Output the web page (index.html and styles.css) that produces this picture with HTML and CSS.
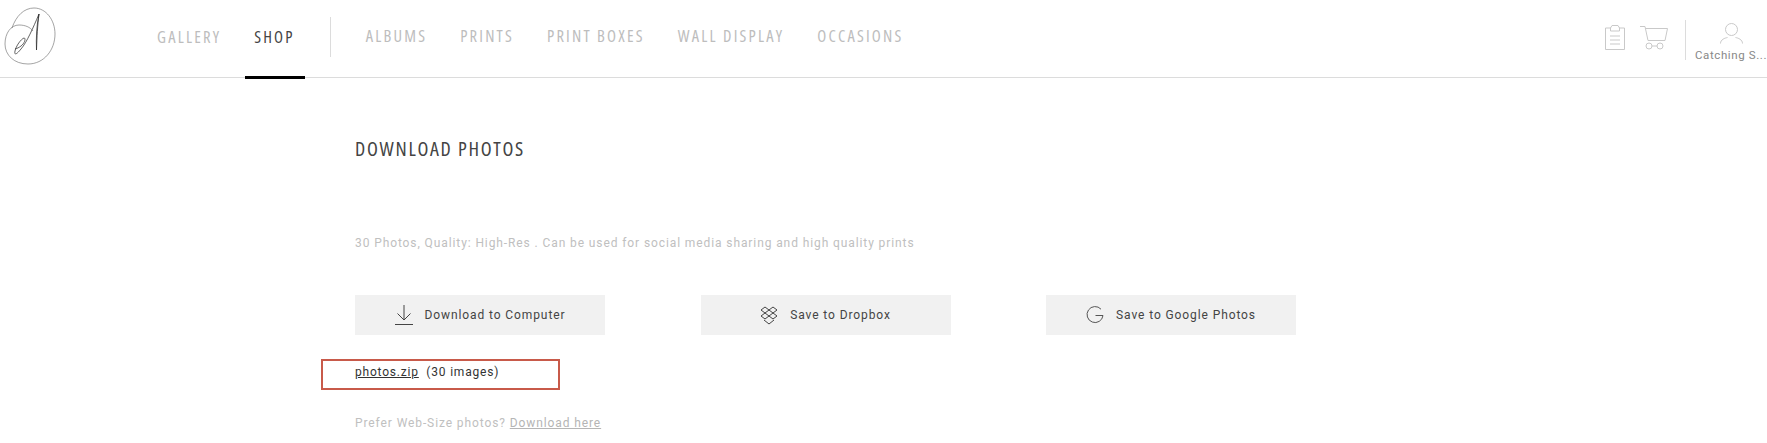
FILE: index.html
```html
<!DOCTYPE html>
<html lang="en">
<head>
<meta charset="utf-8">
<title>Download Photos</title>
<link rel="stylesheet" href="styles.css">
</head>
<body>
<header class="topbar">
  <a class="logo" href="#" aria-label="Logo">
    <svg width="60" height="70" viewBox="0 0 60 70" fill="none">
      <path d="M12 28C16 16 24 8 34 8C46 8 55 20 55 34C55 50 44 64 28 64C14 64 5 55 5 44C5 33 11 25 19 25C25 25 30 27 33 31" stroke="#666" stroke-width=".6"/>
      <path d="M39 14C37.500 26 37 36 36.500 50C36 38 36.500 26 39 14ZM39 14C33 28 27 42 21 49C17 54 14 56 15 51C16 46 21 39 24 38C26 38 25 43 21 46C19 47.500 17 48.500 15 49" stroke="#222" stroke-width=".7"/>
    </svg>
  </a>
  <nav class="nav">
    <a class="nav-link low" href="#">GALLERY</a>
    <a class="nav-link low active" href="#">SHOP</a>
    <span class="nav-sep"></span>
    <a class="nav-link" href="#">ALBUMS</a>
    <a class="nav-link" href="#">PRINTS</a>
    <a class="nav-link" href="#">PRINT BOXES</a>
    <a class="nav-link" href="#">WALL DISPLAY</a>
    <a class="nav-link" href="#">OCCASIONS</a>
  </nav>
  <div class="tools">
    <svg class="tool-clip" width="20" height="25" viewBox="0 0 20 25" fill="none" stroke="#c9c9c9" stroke-width="1">
      <path d="M6 3H.5V24.500H19.500V3H14"/>
      <path d="M5.500 6V3L7 .5H13L14.500 3V6Z"/>
      <path d="M5 11H15M5 15H15M5 19H15"/>
    </svg>
    <svg class="tool-cart" width="28" height="24" viewBox="0 0 28 24" fill="none" stroke="#c9c9c9" stroke-width="1">
      <path d="M0 .5H5L8 14.500H25L27.500 2.500H5.500"/>
      <circle cx="9" cy="20" r="3"/>
      <circle cx="20" cy="20" r="3"/>
      <path d="M12 20H17"/>
    </svg>
    <span class="tool-sep"></span>
    <div class="user">
      <svg width="23" height="21" viewBox="0 0 23 21" fill="none" stroke="#c9c9c9" stroke-width="1">
        <circle cx="11.500" cy="6.500" r="6"/>
        <path d="M.5 20.500C.5 16.500 5 15 7.500 14.500M22.500 20.500C22.500 16.500 18 15 15.500 14.500"/>
      </svg>
      <span class="user-name">Catching S...</span>
    </div>
  </div>
</header>
<main class="content">
  <h1 class="title">DOWNLOAD PHOTOS</h1>
  <p class="desc">30 Photos, Quality: High-Res . Can be used for social media sharing and high quality prints</p>
  <div class="actions">
    <a class="btn" href="#">
      <svg width="18" height="20" viewBox="0 0 18 20" fill="none" stroke="#444" stroke-width="1">
        <path d="M9 0V15M2.500 8.500L9 15L15.500 8.500M0 19.500H18"/>
      </svg>
      <span>Download to Computer</span>
    </a>
    <a class="btn" href="#">
      <svg width="18" height="19" viewBox="0 0 18 19" fill="none" stroke="#444" stroke-width="1">
        <path d="M5 1L9 4L5 7L1 4ZM13 1L17 4L13 7L9 4ZM5 7L9 10L5 13L1 10ZM13 7L17 10L13 13L9 10ZM4 14L9 18L14 14"/>
      </svg>
      <span>Save to Dropbox</span>
    </a>
    <a class="btn" href="#">
      <svg width="18" height="18" viewBox="0 0 18 18" fill="none" stroke="#555" stroke-width="1">
        <path d="M15 3.200A8 8 0 1 0 17 9.500H9.500"/>
      </svg>
      <span>Save to Google Photos</span>
    </a>
  </div>
  <div class="file-box"><a class="file-link" href="#">photos.zip</a>&nbsp; (30 images)</div>
  <p class="prefer">Prefer Web-Size photos? <a class="prefer-link" href="#">Download here</a></p>
</main>
</body>
</html>
```
FILE: styles.css
```css
* { box-sizing: border-box; }
html, body { margin: 0; padding: 0; }
body {
  background: #fff;
  font-family: "Roboto", "Liberation Sans", sans-serif;
  color: #333;
  height: 443px;
  overflow: hidden;
}
a { color: inherit; text-decoration: none; }

.topbar {
  height: 78px;
  border-bottom: 1px solid #dcdcdc;
  display: flex;
  align-items: flex-start;
}
.logo { display: block; width: 157px; flex: none; }
.logo svg { display: block; }

.nav { display: flex; align-items: flex-start; height: 78px; }
.nav-link {
  font-family: "Open Sans", sans-serif;
  font-stretch: 82%;
  font-size: 16.500px;
  line-height: 20px;
  letter-spacing: 2.200px;
  color: #bdbdbd;
  padding-top: 26px;
  margin-right: 33px;
  white-space: nowrap;
}
.nav-link.low { padding-top: 27px; }
.nav-link.active {
  color: #444;
  height: 79px;
  margin: 0 26px 0 -9px;
  padding-left: 9px;
  padding-right: 10px;
  border-bottom: 3px solid #000;
}
.nav-sep { width: 1px; height: 40px; margin: 17px 35px 0 -1px; background: #dcdcdc; }

.tools { margin-left: auto; display: flex; align-items: flex-start; }
.tool-clip { margin: 25px 15px 0 0; }
.tool-cart { margin: 26px 17px 0 0; }
.tool-sep { width: 1px; height: 40px; margin-top: 20px; background: #dcdcdc; }
.user {
  width: 81px;
  padding: 23px 0 0 9px;
  display: flex;
  flex-direction: column;
  align-items: center;
}
.user-name {
  font-size: 11.500px;
  line-height: 14px;
  letter-spacing: .6px;
  color: #888;
  margin-top: 4px;
  white-space: nowrap;
}

.content { padding: 60px 0 0 355px; }
.title {
  margin: 0;
  font-family: "Open Sans", sans-serif;
  font-stretch: 80%;
  font-weight: 400;
  font-size: 20px;
  line-height: 22px;
  letter-spacing: 1.700px;
  color: #444;
}
.desc {
  margin: 75px 0 0;
  font-size: 12px;
  line-height: 16px;
  letter-spacing: .9px;
  color: #c0c0c0;
}
.actions { display: flex; gap: 95.500px; margin-top: 44px; }
.btn {
  width: 250px;
  height: 40px;
  background: #f1f1f1;
  display: flex;
  align-items: center;
  justify-content: center;
  gap: 12px;
  font-size: 12px;
  letter-spacing: .9px;
  color: #444;
}
.btn svg { flex: none; }
.file-box {
  width: 239px;
  height: 31px;
  margin: 24px 0 0 -34px;
  padding-left: 32px;
  border: 2px solid #c85a4a;
  font-size: 12px;
  line-height: 23px;
  letter-spacing: .8px;
  color: #333;
}
.file-link { text-decoration: underline; }
.prefer {
  margin: 25px 0 0;
  font-size: 12px;
  line-height: 16px;
  letter-spacing: .9px;
  color: #c0c0c0;
}
.prefer-link { text-decoration: underline; color: #b5b5b5; }
```
